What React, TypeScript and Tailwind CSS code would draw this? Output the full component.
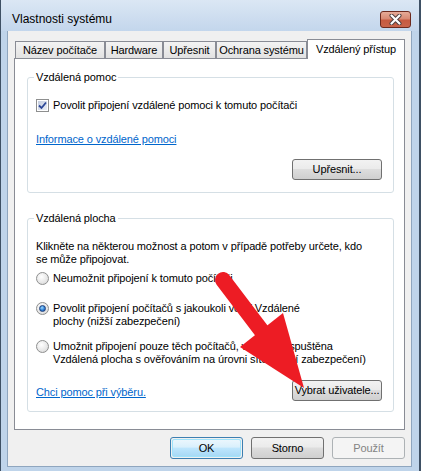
import * as React from "react"

const btn =
  "flex items-center justify-center rounded-[3px] border border-[#707070] bg-[linear-gradient(#f2f2f2_0%,#ebebeb_45%,#dddddd_50%,#cfcfcf_100%)] text-[11px] leading-[13px] text-black"

function CloseButton() {
  return (
    <div className="mt-[11px] w-[31px] h-[17px] rounded-[3px] border border-[#6d2a1e] bg-[linear-gradient(#e6ab98_0%,#d88a74_45%,#c75a40_55%,#c9644a_100%)] flex items-center justify-center">
      <svg width="13" height="11" viewBox="0 0 13 11">
        <path d="M2.5 1.5 L10.5 9.5 M10.5 1.5 L2.5 9.5" stroke="#4a3b3b" strokeWidth="4" strokeLinecap="round" />
        <path d="M2.5 1.5 L10.5 9.5 M10.5 1.5 L2.5 9.5" stroke="#ffffff" strokeWidth="2.2" strokeLinecap="round" />
      </svg>
    </div>
  )
}

function Checkbox() {
  return (
    <div className="w-[13px] h-[13px] shrink-0 border border-[#8e8f8f] bg-white p-px">
      <div className="w-full h-full bg-[linear-gradient(135deg,#c4cde0,#e9edf5)] flex items-center justify-center">
        <svg width="9" height="9" viewBox="0 0 9 9">
          <path d="M1 4.5 L3.5 7 L8 1.5" fill="none" stroke="#2a4596" strokeWidth="1.8" />
        </svg>
      </div>
    </div>
  )
}

function Radio({ checked }: { checked?: boolean }) {
  return (
    <div className="w-[13px] h-[13px] shrink-0 rounded-full border border-[#8e8f8f] bg-[radial-gradient(circle_at_40%_35%,#ffffff_0%,#e6e6e6_60%,#cfcfcf_100%)] flex items-center justify-center">
      {checked && (
        <div className="w-[7px] h-[7px] rounded-full border border-[#1f3f7a] bg-[radial-gradient(circle_at_40%_35%,#9fdcff_0%,#2f7fd6_55%,#1b4f9c_100%)]" />
      )}
    </div>
  )
}

function Tab({ label, w }: { label: string; w: string }) {
  return (
    <div
      className={`${w} h-[17px] border-t border-l border-r border-[#898c95] bg-linear-to-b from-[#f3f3f3] to-[#e2e2e2] flex items-center justify-center text-[11px] leading-[13px]`}
    >
      {label}
    </div>
  )
}

export default function App() {
  return (
    <div className="w-[421px] h-[471px] relative overflow-hidden bg-[#bfd4ea] border-l border-r-2 border-[#3e5064] font-['Liberation_Sans',Arial,sans-serif] text-black">
      {/* title bar */}
      <div className="h-[31px] flex items-start justify-between pl-[11px] pr-[8px] bg-linear-to-b from-[#dbe7f4] to-[#c3d6ec]">
        <span className="mt-[12px] text-[12px] leading-[14px]">Vlastnosti systému</span>
        <CloseButton />
      </div>

      {/* dialog body */}
      <div className="ml-[6px] w-[405px] h-[436px] border-l border-r border-b border-[#8fa6bf] bg-[#f0f0f0] px-[6px] pt-[8px] tracking-[-0.12px]">
        {/* tabs */}
        <div className="h-[19px] flex items-end pl-px">
          <Tab label="Název počítače" w="w-[90px]" />
          <Tab label="Hardware" w="w-[58px]" />
          <Tab label="Upřesnit" w="w-[53px]" />
          <Tab label="Ochrana systému" w="w-[91px]" />
          <div className="relative z-10 w-[98px] h-[20px] -mb-px border-t border-l border-r border-[#898c95] bg-white flex items-start justify-center pt-[3px] text-[11px] leading-[13px]">
            Vzdálený přístup
          </div>
        </div>

        {/* panel */}
        <div className="h-[372px] bg-white border border-[#898c95] text-[11px] leading-[13px]">
          <fieldset className="mt-[11px] ml-[12px] w-[367px] border border-[#d5dfe5] rounded-[3px]">
            <legend className="ml-[6px] px-[2px] leading-[14px]">Vzdálená pomoc</legend>
            <div className="flex flex-col pl-[8px] pr-[11px] pb-[12px]">
              <div className="mt-[15px] h-[13px] flex items-center gap-[4px]">
                <Checkbox />
                <span>Povolit připojení vzdálené pomoci k tomuto počítači</span>
              </div>
              <span className="mt-[21px] text-[#0066cc] underline">Informace o vzdálené pomoci</span>
              <div className={`${btn} mt-[13px] self-end w-[90px] h-[21px]`}>Upřesnit...</div>
            </div>
          </fieldset>

          <fieldset className="mt-[18px] ml-[12px] w-[367px] border border-[#d5dfe5] rounded-[3px]">
            <legend className="ml-[6px] px-[2px] leading-[14px]">Vzdálená plocha</legend>
            <div className="flex flex-col pl-[8px] pr-[11px] pb-[10px]">
              <p className="mt-[15px]">
                Klikněte na některou možnost a potom v případě potřeby určete, kdo
                <br />
                se může připojovat.
              </p>
              <div className="mt-[6px] flex items-start gap-[4px]">
                <Radio />
                <span>Neumožnit připojení k tomuto počítači</span>
              </div>
              <div className="mt-[17px] flex items-start gap-[4px]">
                <Radio checked />
                <span>
                  Povolit připojení počítačů s jakoukoli verzí Vzdálené
                  <br />
                  plochy (nižší zabezpečení)
                </span>
              </div>
              <div className="mt-[12px] flex items-start gap-[4px]">
                <Radio />
                <span>
                  Umožnit připojení pouze těch počítačů, v nichž je spuštěna
                  <br />
                  Vzdálená plocha s ověřováním na úrovni sítě (vyšší zabezpečení)
                </span>
              </div>
              <div className="mt-[14px] flex items-end justify-between">
                <span className="mb-[2px] text-[#0066cc] underline">Chci pomoc při výběru.</span>
                <div className={`${btn} w-[90px] h-[21px]`}>Vybrat uživatele...</div>
              </div>
            </div>
          </fieldset>
        </div>

        {/* dialog buttons */}
        <div className="mt-[7px] flex justify-end gap-[8px]">
          <div className="w-[73px] h-[22px] rounded-[3px] border border-[#3c7fb1] p-px">
            <div className="w-full h-full rounded-[2px] border border-[#9fe3fb] bg-[linear-gradient(#eaf6fd_0%,#d9f0fc_45%,#bee6fd_50%,#a7d9f5_100%)] flex items-center justify-center text-[11px] leading-[13px]">
              OK
            </div>
          </div>
          <div className={`${btn} w-[73px] h-[22px]`}>Storno</div>
          <div className="w-[73px] h-[22px] rounded-[3px] border border-[#adb2b5] bg-[#f4f4f4] flex items-center justify-center text-[11px] leading-[13px] text-[#838383]">
            Použít
          </div>
        </div>
      </div>

      {/* red annotation arrow */}
      <svg className="absolute inset-0 pointer-events-none" width="421" height="471" viewBox="0 0 421 471">
        <line x1="222" y1="280" x2="263" y2="334" stroke="#ed1c24" strokeWidth="16" strokeLinecap="round" />
        <polygon points="239,347 282,313 303,388" fill="#ed1c24" />
      </svg>
    </div>
  )
}
